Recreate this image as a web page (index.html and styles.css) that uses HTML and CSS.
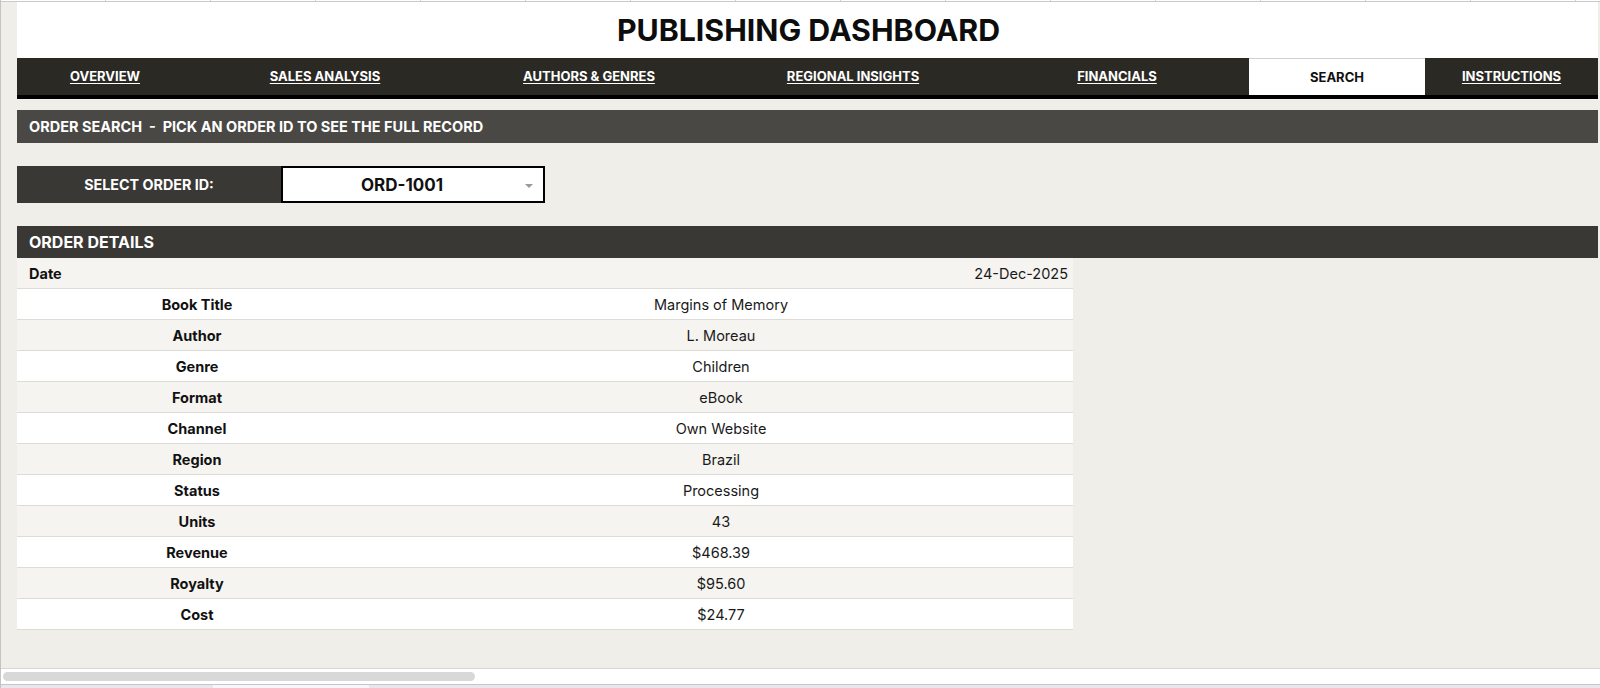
FILE: index.html
```html
<!DOCTYPE html>
<html lang="en">
<head>
<meta charset="UTF-8">
<meta name="viewport" content="width=device-width, initial-scale=1.0">
<title>Publishing Dashboard - Search</title>
<link rel="stylesheet" href="styles.css">
</head>
<body>

<div class="window">
    <div class="col-ticks"></div>

    <div class="sheet">
        <div class="title">PUBLISHING DASHBOARD</div>

        <div class="navbar">
            <a href="#">OVERVIEW</a>
            <a href="#">SALES ANALYSIS</a>
            <a href="#">AUTHORS &amp; GENRES</a>
            <a href="#">REGIONAL INSIGHTS</a>
            <a href="#">FINANCIALS</a>
            <a href="#" class="active">SEARCH</a>
            <a href="#">INSTRUCTIONS</a>
        </div>

        <div class="section-bar">ORDER SEARCH &nbsp;-&nbsp; PICK AN ORDER ID TO SEE THE FULL RECORD</div>

        <div class="picker">
            <div class="picker-label">SELECT ORDER ID:</div>
            <div class="picker-box">
                <span class="picker-value">ORD-1001</span>
                <span class="picker-arrow"></span>
            </div>
        </div>

        <div class="details-bar">ORDER DETAILS</div>

        <div class="details">
            <div class="row date-row"><div class="label">Date</div><div class="value">24-Dec-2025</div></div>
            <div class="row"><div class="label">Book Title</div><div class="value">Margins of Memory</div></div>
            <div class="row"><div class="label">Author</div><div class="value">L. Moreau</div></div>
            <div class="row"><div class="label">Genre</div><div class="value">Children</div></div>
            <div class="row"><div class="label">Format</div><div class="value">eBook</div></div>
            <div class="row"><div class="label">Channel</div><div class="value">Own Website</div></div>
            <div class="row"><div class="label">Region</div><div class="value">Brazil</div></div>
            <div class="row"><div class="label">Status</div><div class="value">Processing</div></div>
            <div class="row"><div class="label">Units</div><div class="value">43</div></div>
            <div class="row"><div class="label">Revenue</div><div class="value">$468.39</div></div>
            <div class="row"><div class="label">Royalty</div><div class="value">$95.60</div></div>
            <div class="row"><div class="label">Cost</div><div class="value">$24.77</div></div>
        </div>
    </div>

    <div class="hscroll"><div class="thumb"></div></div>
    <div class="tabs"><div class="tab"></div></div>
</div>

</body>
</html>
```

FILE: styles.css
```css
/* Sheet-style dashboard page */
body {
    font-family: Inter, "Liberation Sans", Arial, sans-serif;
    margin: 0;
    padding: 0;
    background-color: #efeee9;
    color: #111;
    overflow: hidden;
}

.window {
    height: 688px;
    display: flex;
    flex-direction: column;
    border-left: 1px solid #c4c4c4;
    box-sizing: border-box;
}

.col-ticks {
    height: 1px;
    border-bottom: 1px solid #c9c9c9;
    background-color: #fff;
    background-image: repeating-linear-gradient(to right, transparent 0, transparent 104px, #d0d0d0 104px, #d0d0d0 105px);
}

.sheet {
    flex: 1;
    padding-left: 16px;
    width: 1581px;
}

.title {
    height: 56px;
    background-color: #fff;
    text-align: center;
    font-size: 30.3px;
    font-weight: 700;
    line-height: 57px;
    color: #0d0d0d;
    padding-left: 2px;
}

.navbar {
    display: grid;
    grid-template-columns: 176px 264px 264px 264px 264px 176px 173px;
    height: 37px;
    background-color: #2b2924;
    border-bottom: 4px solid #000;
}

.navbar a {
    color: #fff;
    font-size: 13px;
    font-weight: 700;
    text-align: center;
    line-height: 37px;
    text-decoration: underline;
    text-underline-offset: 2px;
}

.navbar a.active {
    background-color: #fff;
    color: #111;
    text-decoration: none;
    border-top: 1px solid #d0d0d0;
    line-height: 36px;
}

.section-bar {
    margin-top: 11px;
    height: 33px;
    line-height: 33px;
    background-color: #4a4844;
    color: #fff;
    font-size: 14.5px;
    font-weight: 700;
    padding-left: 12px;
}

.picker {
    margin-top: 23px;
    display: flex;
    height: 37px;
}

.picker-label {
    width: 264px;
    background-color: #3a3834;
    color: #fff;
    font-size: 14.3px;
    font-weight: 700;
    text-align: center;
    line-height: 37px;
}

.picker-box {
    width: 264px;
    box-sizing: border-box;
    border: 2px solid #000;
    background-color: #fff;
    display: flex;
    align-items: center;
    position: relative;
}

.picker-value {
    flex: 1;
    text-align: center;
    font-size: 17px;
    font-weight: 700;
    padding-right: 22px;
}

.picker-arrow {
    position: absolute;
    right: 10px;
    top: 16px;
    border-left: 4px solid transparent;
    border-right: 4px solid transparent;
    border-top: 4px solid #9a9a9a;
}

.details-bar {
    margin-top: 23px;
    height: 32px;
    line-height: 32px;
    background-color: #3a3834;
    color: #fff;
    font-size: 16px;
    font-weight: 700;
    padding-left: 12px;
}

.details {
    width: 1056px;
}

.row {
    display: grid;
    grid-template-columns: 352px 704px;
    height: 30px;
    line-height: 31px;
    font-size: 14.5px;
    border-bottom: 1px solid #dcdbd6;
    background-color: #fff;
}

.row:nth-child(odd) {
    background-color: #f5f4f0;
}

.row .label {
    font-weight: 700;
    text-align: center;
    padding-left: 8px;
}

.row .value {
    text-align: center;
    color: #1a1a1a;
}

.date-row .label {
    text-align: left;
    padding-left: 12px;
}

.date-row .value {
    text-align: right;
    padding-right: 5px;
}

.hscroll {
    height: 15px;
    background-color: #fff;
    border-top: 1px solid #d6d6d6;
    border-bottom: 1px solid #c4c6cc;
    display: flex;
    align-items: center;
    padding-left: 2px;
}

.hscroll .thumb {
    width: 472px;
    height: 9px;
    border-radius: 5px;
    background-color: #d8d8d8;
}

.tabs {
    height: 3px;
    background-color: #e6e8ee;
    padding-left: 212px;
}

.tabs .tab {
    width: 156px;
    height: 3px;
    background-color: #f6f7f9;
}
```
